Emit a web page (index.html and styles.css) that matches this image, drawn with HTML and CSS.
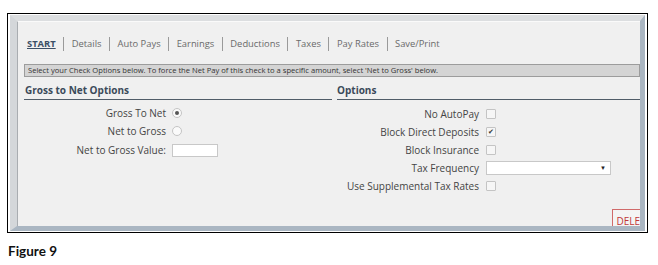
FILE: index.html
```html
<!DOCTYPE html>
<html lang="en">
<head>
  <meta charset="UTF-8" />
  <title>Check Options</title>
  <link rel="stylesheet" href="styles.css">
</head>
<body>
  <div class="figure">
    <div class="window">
      <div class="panel">
        <nav class="tabs">
          <a class="tab active">START</a>
          <a class="tab">Details</a>
          <a class="tab">Auto Pays</a>
          <a class="tab">Earnings</a>
          <a class="tab">Deductions</a>
          <a class="tab">Taxes</a>
          <a class="tab">Pay Rates</a>
          <a class="tab">Save/Print</a>
        </nav>

        <div class="notice">Select your Check Options below. To force the Net Pay of this check to a specific amount, select 'Net to Gross' below.</div>

        <div class="sections">
          <div class="section left">
            <h3>Gross to Net Options</h3>
            <div class="rows">
              <div class="row"><label>Gross To Net</label><span class="radio on"></span></div>
              <div class="row"><label>Net to Gross</label><span class="radio"></span></div>
              <div class="row tall"><label>Net to Gross Value:</label><input class="text" type="text"></div>
            </div>
          </div>
          <div class="section right">
            <h3>Options</h3>
            <div class="rows">
              <div class="row"><label>No AutoPay</label><span class="check"></span></div>
              <div class="row"><label>Block Direct Deposits</label><span class="check on">&#10004;</span></div>
              <div class="row"><label>Block Insurance</label><span class="check"></span></div>
              <div class="row"><label>Tax Frequency</label><span class="select"><span class="arrow">&#9660;</span></span></div>
              <div class="row"><label>Use Supplemental Tax Rates</label><span class="check"></span></div>
            </div>
          </div>
        </div>

        <div class="actions"><button class="delete">DELE</button></div>
      </div>
    </div>
  </div>
  <div class="caption">Figure 9</div>
</body>
</html>
```

FILE: styles.css
```css
body {
  margin: 0;
  background: #fff;
  font-family: 'Open Sans', sans-serif;
}
.figure {
  margin: 13px 0 0 7px;
  width: 635px;
  height: 216px;
  border: 1px solid #000;
  padding: 1px 2px;
}
.window {
  height: 100%;
  box-sizing: border-box;
  border-style: solid;
  border-width: 6px 5px 5px 7px;
  border-color: #dcdee0 #aab6c2 #aab6c2 #d4d7da;
}
.panel {
  height: 100%;
  box-sizing: border-box;
  background: #f0f0f0;
  border-left: 1px solid #a9adb1;
  border-top: 1px solid #fafafa;
  padding: 14px 0 0 6px;
  overflow: hidden;
  position: relative;
}
.tabs {
  display: flex;
  align-items: center;
  font-size: 9.4px;
  height: 16px;
}
.tab {
  color: #6a6a6a;
  padding: 0 7.5px;
  border-left: 1px solid #9a9a9a;
  line-height: 14px;
}
.tab:first-child {
  border-left: none;
  padding-left: 3px;
}
.tab.active {
  color: #3b4f66;
  font-weight: bold;
  text-decoration: underline;
}
.notice {
  margin-top: 12px;
  height: 13px;
  box-sizing: border-box;
  background: #d4d4d4;
  border: 1px solid #9c9c9c;
  font-size: 7.6px;
  line-height: 11px;
  padding-left: 3px;
  color: #333;
  white-space: nowrap;
}
.sections {
  display: flex;
  margin-top: 7px;
}
.section h3 {
  margin: 0;
  font-size: 10px;
  font-weight: bold;
  color: #3b4a5a;
  line-height: 13px;
  border-bottom: 1px solid #505c68;
  padding-bottom: 2px;
}
.left {
  width: 308px;
}
.left h3 {
  padding-left: 1px;
}
.right {
  flex: 1;
  margin-left: 5px;
}
.rows {
  padding-top: 4px;
}
.right .rows {
  padding-top: 5px;
}
.row {
  display: flex;
  align-items: center;
  height: 18px;
  font-size: 10px;
  color: #444;
}
.row.tall {
  height: 20px;
}
.left .row label {
  width: 142px;
  text-align: right;
  margin-right: 6px;
}
.right .row label {
  width: 142px;
  text-align: right;
  margin-right: 7px;
}
.radio {
  width: 8px;
  height: 8px;
  border-radius: 50%;
  border: 1px solid #c4c4c4;
  background: #fafafa;
  position: relative;
}
.radio.on::after {
  content: "";
  position: absolute;
  left: 2px;
  top: 2px;
  width: 4px;
  height: 4px;
  border-radius: 50%;
  background: #555;
}
.text {
  width: 46px;
  height: 13px;
  box-sizing: border-box;
  border: 1px solid #c8c8c8;
  background: #fff;
  padding: 0;
}
.check {
  width: 8px;
  height: 8px;
  border: 1px solid #c4c4c4;
  background: #f6f6f6;
  border-radius: 1px;
  font-size: 7px;
  line-height: 8px;
  text-align: center;
  color: #333;
}
.select {
  width: 125px;
  height: 14px;
  box-sizing: border-box;
  border: 1px solid #c8c8c8;
  background: #fff;
  display: flex;
  justify-content: flex-end;
  align-items: center;
  padding-right: 4px;
}
.arrow {
  font-size: 6px;
  color: #222;
}
.actions {
  position: absolute;
  right: -4px;
  bottom: -4px;
}
.delete {
  font-family: 'Open Sans', sans-serif;
  font-size: 10px;
  color: #c03838;
  background: #f4f4f4;
  border: 1px solid #d06a6a;
  height: 19px;
  padding: 4px 3px 0;
  line-height: 14px;
}
.caption {
  margin: 10px 0 0 8px;
  font-family: 'Lato', sans-serif;
  font-weight: bold;
  font-size: 13.5px;
  color: #111;
}
```
